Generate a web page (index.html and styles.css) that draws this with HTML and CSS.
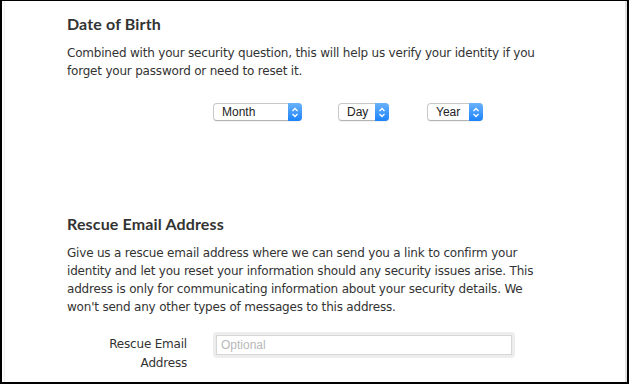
FILE: index.html
```html
<!DOCTYPE html>
<html lang="en">
<head>
    <meta charset="UTF-8">
    <title>Date of Birth and Rescue Email</title>
    <link rel="stylesheet" href="styles.css">
</head>
<body>
    <div class="window">
        <div class="page">
            <div class="section">
                <h2>Date of Birth</h2>
                <p>Combined with your security question, this will help us verify your identity if you forget your password or need to reset it.</p>
                <div class="form-row dob-row">
                    <div class="label"></div>
                    <div class="dob-fields">
                        <div class="select select-month">
                            <span class="select-text">Month</span>
                            <span class="select-arrows">
                                <svg width="8" height="11" viewBox="0 0 8 11"><path d="M1.5 4 L4 1.5 L6.5 4 M1.5 7 L4 9.5 L6.5 7" fill="none" stroke="#fff" stroke-width="1.3"/></svg>
                            </span>
                        </div>
                        <div class="select select-day">
                            <span class="select-text">Day</span>
                            <span class="select-arrows">
                                <svg width="8" height="11" viewBox="0 0 8 11"><path d="M1.5 4 L4 1.5 L6.5 4 M1.5 7 L4 9.5 L6.5 7" fill="none" stroke="#fff" stroke-width="1.3"/></svg>
                            </span>
                        </div>
                        <div class="select select-year">
                            <span class="select-text">Year</span>
                            <span class="select-arrows">
                                <svg width="8" height="11" viewBox="0 0 8 11"><path d="M1.5 4 L4 1.5 L6.5 4 M1.5 7 L4 9.5 L6.5 7" fill="none" stroke="#fff" stroke-width="1.3"/></svg>
                            </span>
                        </div>
                    </div>
                </div>
            </div>

            <div class="section rescue">
                <h2>Rescue Email Address</h2>
                <p>Give us a rescue email address where we can send you a link to confirm your identity and let you reset your information should any security issues arise. This address is only for communicating information about your security details. We won't send any other types of messages to this address.</p>
                <div class="form-row">
                    <label class="label" for="rescue-email">Rescue Email Address</label>
                    <div class="input-ring">
                        <input id="rescue-email" type="text" placeholder="Optional">
                    </div>
                </div>
            </div>
        </div>
    </div>
</body>
</html>
```

FILE: styles.css
```css
body {
    margin: 0;
    font-family: 'DejaVu Sans', sans-serif;
    color: #333;
}
.window {
    width: 629px;
    height: 384px;
    box-sizing: border-box;
    border: 2px solid #000;
    border-top-width: 1px;
    background-color: #fff;
    overflow: hidden;
}
.page {
    height: 100%;
    box-sizing: border-box;
    border-right: 2px solid #e2e2e2;
    margin-left: 2px;
    border-left: 1px solid #f0f0f0;
    padding-left: 62px;
    padding-top: 14px;
}
.section {
    width: 476px;
}
h2 {
    font-family: Lato, sans-serif;
    font-size: 16px;
    font-weight: bold;
    letter-spacing: 0.15px;
    color: #333;
    margin: 0;
    line-height: 18px;
}
p {
    font-size: 12px;
    line-height: 18px;
    letter-spacing: -0.2px;
    margin: 11px 0 0;
    color: #333;
}
.form-row {
    display: flex;
    gap: 26px;
}
.label {
    width: 120px;
    flex-shrink: 0;
    text-align: right;
    font-size: 12px;
    line-height: 19px;
    letter-spacing: -0.2px;
    padding-top: 3px;
    color: #333;
}
.dob-row {
    margin-top: 23px;
}
.dob-fields {
    display: flex;
    gap: 36px;
}
.select-day {
    margin-right: 2px;
}
.select {
    display: flex;
    height: 18px;
    box-sizing: border-box;
    border: 1px solid #c8c8c8;
    border-bottom-color: #b4b4b4;
    border-right: none;
    border-radius: 4px;
    background-color: #fff;
    box-shadow: 0 1px 1px rgba(0,0,0,0.06);
}
.select-month {
    width: 89px;
}
.select-day {
    width: 51px;
}
.select-year {
    width: 56px;
}
.select-text {
    flex: 1;
    font-family: 'Liberation Sans', sans-serif;
    font-size: 12px;
    line-height: 16px;
    padding-left: 8px;
    color: #222;
}
.select-arrows {
    width: 14px;
    margin: -1px 0;
    display: flex;
    align-items: center;
    justify-content: center;
    border-radius: 0 4px 4px 0;
    background: linear-gradient(#6ab2fb, #1c83fb);
}
.rescue {
    margin-top: 94px;
}
.rescue .form-row {
    margin-top: 16px;
}
.input-ring {
    width: 302px;
    height: 26px;
    box-sizing: border-box;
    padding: 3px;
    border-radius: 4px;
    background-color: #ededed;
}
input {
    display: block;
    width: 100%;
    height: 100%;
    box-sizing: border-box;
    margin: 0;
    border: 1px solid #d6d6d6;
    padding: 0 4px;
    font-family: 'Liberation Sans', sans-serif;
    font-size: 12px;
    outline: none;
}
input::placeholder {
    color: #b8b8b8;
}
```
